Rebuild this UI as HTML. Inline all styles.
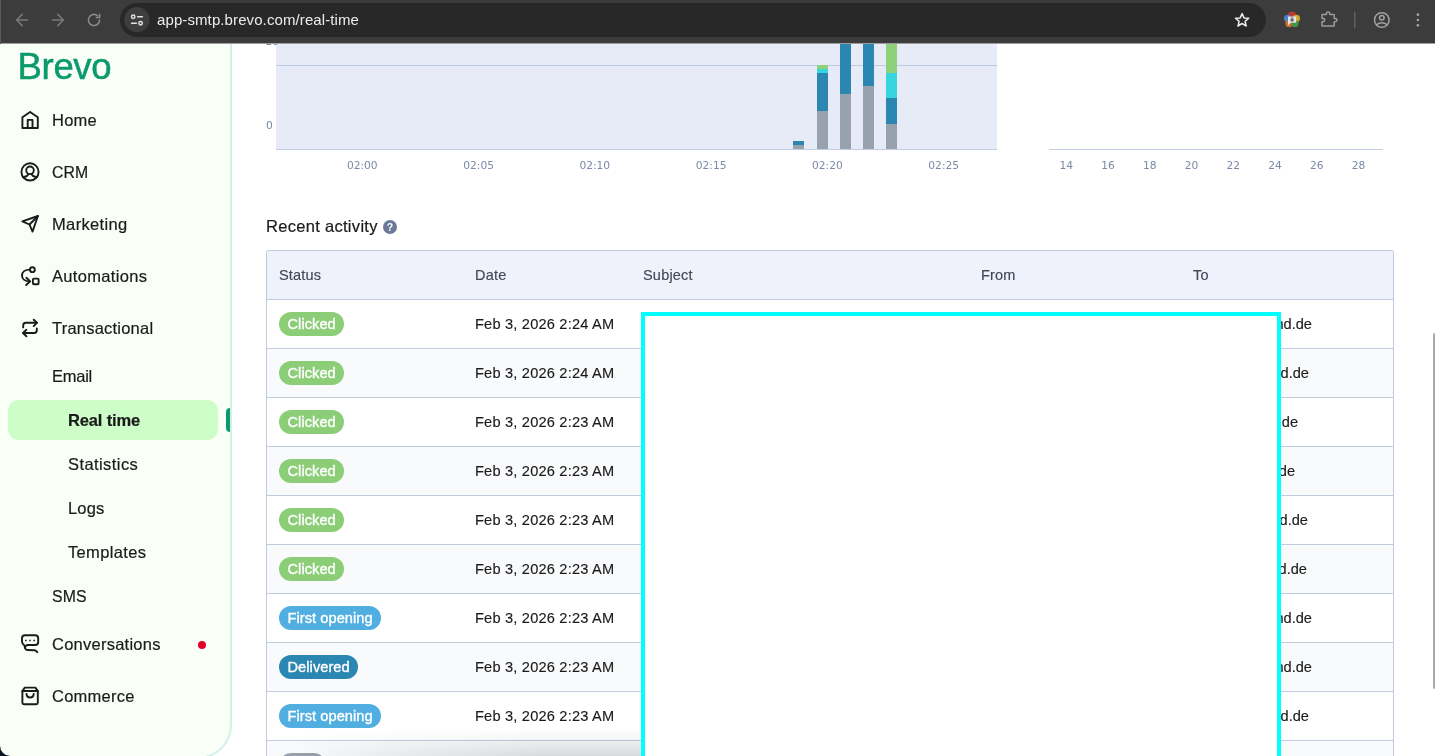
<!DOCTYPE html>
<html lang="en">
<head>
<meta charset="utf-8">
<title>Brevo - Real time</title>
<style>
*{box-sizing:border-box;margin:0;padding:0}
html,body{width:1435px;height:756px;overflow:hidden;background:#fff}
body{font-family:"Liberation Sans",sans-serif;color:#1b1b1b;position:relative}
#side,#main,#chrome{will-change:transform}
/* browser chrome */
#chrome{position:absolute;left:0;top:0;width:1435px;height:43px;background:#3c3c3c;z-index:50}
#chrome .edge{position:absolute;left:0;top:0;width:1px;height:44px;background:#5a5a5a}
#pill{position:absolute;left:120px;top:3px;width:1146px;height:34px;border-radius:17px;background:#282828}
#siteinfo{position:absolute;left:4px;top:3px;width:26px;height:26px;border-radius:13px;background:#3d3d3d}
#url{position:absolute;left:37px;top:0;height:34px;line-height:34px;font-size:15px;color:#ececec;white-space:nowrap;letter-spacing:0.1px}
#chrome svg{position:absolute;overflow:visible}
/* sidebar */
#side{position:absolute;left:0;top:44px;width:232px;height:715px;background:#f9fff6;border-right:2px solid #d2f0e8;border-bottom:2px solid #d2f0e8;border-bottom-right-radius:34px;z-index:5}
#logo{position:absolute;left:17.6px;top:3px;font-size:36.5px;line-height:40px;color:#0b996e;letter-spacing:-0.35px;-webkit-text-stroke:0.5px #0b996e}
.nav{position:absolute;left:52px;height:24px;line-height:24px;font-size:16.5px;color:#1b1b1b;white-space:nowrap;-webkit-text-stroke:0.2px #1b1b1b}
.nav.sub{left:68px}
.ico{position:absolute;left:19px;width:22px;height:22px;overflow:visible}
#active{position:absolute;left:8px;top:356px;width:210px;height:40px;border-radius:11px;background:#cdfec8}
#ind{position:absolute;left:226px;top:364px;width:4.4px;height:24px;background:#0b996e;border-radius:4px 0 0 4px}
#dot{position:absolute;left:198px;top:597px;width:8px;height:8px;border-radius:4px;background:#e4002b}
#corner{position:absolute;left:0;top:744px;width:12px;height:12px;background:#0a1626;z-index:4}
/* main */
#main{position:absolute;left:232px;top:44px;width:1203px;height:712px;background:#fff;overflow:hidden}
.dv{font-family:"DejaVu Sans",sans-serif;font-size:10.5px;color:#7d8aa8;position:absolute;white-space:nowrap}
h2{position:absolute;left:34px;top:170px;font-size:16.5px;font-weight:400;line-height:24px;letter-spacing:0.3px;color:#1b1b1b;white-space:nowrap;-webkit-text-stroke:0.2px #1b1b1b}
#tbl{position:absolute;left:34px;top:206px;width:1128px;height:520px;border:1px solid #c0cbdf;border-bottom:none;border-radius:3px 3px 0 0;background:#fff;overflow:hidden}
.hd{position:absolute;left:0;top:0;width:1126px;height:48px;background:#eff2fa}
.hd span{position:absolute;top:0;line-height:48px;font-size:14.5px;color:#414757;white-space:nowrap;letter-spacing:0.2px;-webkit-text-stroke:0.15px #414757}
.row{position:absolute;left:0;width:1126px;height:49px;border-top:1px solid #c0cbdf;background:#fff}
.row.alt{background:#f9fafc}
.row .d{position:absolute;left:208px;top:0;line-height:48px;font-size:14.6px;letter-spacing:0.2px;color:#1b1b1b;white-space:nowrap;-webkit-text-stroke:0.15px #1b1b1b}
.row .to{position:absolute;top:0;line-height:48px;font-size:14.6px;color:#1b1b1b;white-space:nowrap;right:0;-webkit-text-stroke:0.15px #1b1b1b}
.bdg{position:absolute;left:12px;top:12px;height:24px;line-height:24px;border-radius:12px;padding:0 8.5px;font-size:14.6px;letter-spacing:0.06px;color:#fff;white-space:nowrap;-webkit-text-stroke:0.35px #fff}
.g{background:#8ccd78}.lb{background:#51aee0}.db{background:#2b86b2}.gr{background:#98a1ae}
#help{position:absolute;left:151px;top:176px;width:14px;height:14px;border-radius:7px;background:#6b7a99;color:#fff;font-size:10.5px;font-weight:700;line-height:14px;text-align:center}
#cyan{position:absolute;left:409px;top:268px;width:640px;height:460px;border:4px solid #00ffff;background:#fff;z-index:8}
#sb{position:absolute;left:1201px;top:289px;width:3px;height:356px;background:#a9a9a9;border-radius:2px 0 0 2px}
#shade{position:absolute;left:58px;top:684px;width:351px;height:28px;z-index:7;pointer-events:none;background:linear-gradient(to bottom,rgba(0,0,0,0) 0%,rgba(0,0,0,0.04) 40%,rgba(0,0,0,0.13) 100%);-webkit-mask-image:linear-gradient(to right,transparent 0%,rgba(0,0,0,0.5) 30%,#000 75%);mask-image:linear-gradient(to right,transparent 0%,rgba(0,0,0,0.5) 30%,#000 75%)}
</style>
</head>
<body>
<div id="chrome">
  <div class="edge"></div>
  <div id="pill">
    <div id="url">app-smtp.brevo.com/real-time</div>
  </div>
  <svg width="1435" height="44" viewBox="0 0 1435 44" style="left:0;top:0" fill="none" stroke-linecap="round" stroke-linejoin="round">
    <g stroke="#7a7a7a" stroke-width="1.5">
      <path d="M27.6 20H16.8M22.2 14.4L16.6 20L22.2 25.6"/>
      <path d="M52.4 20H63.2M57.8 14.4L63.4 20L57.8 25.6"/>
    </g>
    <g stroke="#8c8c8c" stroke-width="1.5">
      <path d="M99.6 20A5.6 5.6 0 1 1 97.6 15.7"/>
      <path d="M99.6 14.2V17.6H96.2" />
    </g>
    <circle cx="137" cy="19.7" r="12.6" fill="#3e3e3e"/>
    <g stroke="#e3e3e3" stroke-width="1.5">
      <circle cx="133.2" cy="16.7" r="1.7"/>
      <path d="M137.6 16.7H142.4"/>
      <circle cx="140.6" cy="23.2" r="1.7"/>
      <path d="M131.6 23.2H136.4"/>
    </g>
    <!-- star -->
    <path d="M1242.1 13.6L1244 17.9L1248.7 18.3L1245.1 21.4L1246.2 26L1242.1 23.5L1238 26L1239.1 21.4L1235.5 18.3L1240.2 17.9Z" stroke="#ececec" stroke-width="1.5"/>
    <!-- extension flower -->
    <g stroke="none">
      <circle cx="1292" cy="15.6" r="4" fill="#b93a30"/>
      <circle cx="1287.6" cy="18.4" r="3.6" fill="#4d80c4"/>
      <circle cx="1296.4" cy="18.4" r="3.6" fill="#d1a826"/>
      <circle cx="1289" cy="23.6" r="3.6" fill="#cf7228"/>
      <circle cx="1295" cy="23.6" r="3.6" fill="#3f9747"/>
      <path d="M1288 16.4h8.2v6.4h-5.4l-2.8 2.6z" fill="#e4e4e4"/>
      <rect x="1290.6" y="18.8" width="3" height="2.6" fill="#5f6368"/>
      <path d="M1291.2 18.8v-0.6a0.9 0.9 0 0 1 1.8 0v0.6" stroke="#5f6368" stroke-width="0.7" fill="none"/>
    </g>
    <!-- puzzle -->
    <path d="M1322 14.6H1326.4V13.6A1.7 1.7 0 0 1 1329.8 13.6V14.6H1334.2V18.4H1335.2A1.7 1.7 0 0 1 1335.2 21.8H1334.2V26H1322V21.8H1323A1.7 1.7 0 0 0 1323 18.4H1322Z" stroke="#9b9b9b" stroke-width="1.5"/>
    <path d="M1354.8 12.4V27.6" stroke="#6a6a6a" stroke-width="1.2"/>
    <!-- profile -->
    <g stroke="#a2a2a2" stroke-width="1.5">
      <circle cx="1381.8" cy="20" r="7.3"/>
      <circle cx="1381.8" cy="17.8" r="2.3"/>
      <path d="M1376.6 24.6Q1381.8 21 1387 24.6"/>
    </g>
    <g fill="#a2a2a2" stroke="none"><circle cx="1417.9" cy="14.7" r="1.35"/><circle cx="1417.9" cy="20" r="1.35"/><circle cx="1417.9" cy="25.3" r="1.35"/></g>
  </svg>
</div>

<div style="position:absolute;left:0;top:43px;width:1435px;height:1px;background:rgba(60,60,60,0.5);z-index:51"></div>
<div id="side">
  <div id="logo">Brevo</div>
  <div id="active"></div><div id="ind"></div>
  <div class="nav" style="top:64px;letter-spacing:0.225px">Home</div>
  <div class="nav" style="top:117px;letter-spacing:0.033px;font-size:15.8px">CRM</div>
  <div class="nav" style="top:168px;letter-spacing:0.354px">Marketing</div>
  <div class="nav" style="top:220px;letter-spacing:0.328px">Automations</div>
  <div class="nav" style="top:272px;letter-spacing:0.220px">Transactional</div>
  <div class="nav" style="top:320px;letter-spacing:-0.260px">Email</div>
  <div class="nav sub" style="top:364px;font-weight:700;letter-spacing:-0.146px">Real time</div>
  <div class="nav sub" style="top:408px;letter-spacing:0.420px">Statistics</div>
  <div class="nav sub" style="top:452px;letter-spacing:0.175px">Logs</div>
  <div class="nav sub" style="top:496px;letter-spacing:0.344px">Templates</div>
  <div class="nav" style="top:541px;letter-spacing:0.103px;font-size:15.8px">SMS</div>
  <div class="nav" style="top:588px;letter-spacing:0.246px">Conversations</div>
  <div class="nav" style="top:640px;letter-spacing:0.237px">Commerce</div>
  <div id="dot"></div>
</div>
<svg id="icons" width="232" height="756" viewBox="0 0 232 756" style="position:absolute;left:0;top:0;z-index:6" fill="none" stroke="#1b1b1b" stroke-width="1.9" stroke-linecap="round" stroke-linejoin="round">
  <!-- home -->
  <path d="M22.4 128V117.3L30.1 112L37.8 117.3V128Z"/>
  <path d="M27.7 128V119.9H32.5V128"/>
  <!-- crm -->
  <circle cx="30" cy="171.9" r="8.6"/>
  <circle cx="30" cy="170.3" r="3.8"/>
  <path d="M22.9 177.1Q27.6 176.7 28.3 174M37.1 177.1Q32.4 176.7 31.7 174"/>
  <!-- marketing -->
  <path d="M37.9 216L22.3 221.3L29.5 224.5L32.5 231.6Z"/>
  <path d="M29.5 224.5L37.9 216"/>
  <!-- automations -->
  <circle cx="32.4" cy="269.7" r="2.4"/>
  <path d="M29.8 269.6C25 269.6 22 272 22 275.5C22 279 25 281.4 29.8 281.4"/>
  <path d="M26.4 277.8L30.1 281.4L26.2 285"/>
  <rect x="32.9" y="278.6" width="5.7" height="5.6" rx="1"/>
  <!-- transactional -->
  <path d="M23.2 327.4V325.4Q23.2 322.7 25.9 322.7H36.8"/>
  <path d="M33.7 319.7L37 322.7L33.7 326.1"/>
  <path d="M36.8 328.4V330.3Q36.8 333 34.1 333H23.2"/>
  <path d="M26.4 329.8L23 333L26.4 336.3"/>
  <!-- conversations -->
  <path d="M27.6 645H35.2Q38.2 645 38.2 642V638.2Q38.2 635.2 35.2 635.2H25Q22 635.2 22 638.2V641.6Q22 643.8 24.6 645.8Q24.8 650 27.4 650L34.6 650.3Q36.2 650.5 37.3 652.2"/>
  <path d="M27.6 645Q25.4 645.4 25 647.6"/>
  <path d="M25.9 640.4h0.01M30 640.4h0.01M34.1 640.4h0.01" stroke-width="1.5" stroke-linecap="square"/>
  <!-- commerce -->
  <path d="M22.4 691V702.7Q22.4 704.2 23.9 704.2H36.3Q37.8 704.2 37.8 702.7V691Z"/>
  <path d="M22.4 691L24.8 687.6H35.4L37.8 691"/>
  <path d="M26.5 693.9Q26.7 697.5 30.1 697.5Q33.5 697.5 33.7 693.9"/>
</svg>
<svg width="12" height="12" viewBox="0 0 12 12" style="position:absolute;left:0;top:744px;z-index:9"><path d="M0 1.5A10.5 10.5 0 0 0 10.5 12H0Z" fill="#0b1322"/></svg>

<div id="main">
  <!-- chart -->
  <svg id="chartsvg" width="1203" height="150" viewBox="232 44 1203 150" style="position:absolute;left:0;top:0" shape-rendering="crispEdges">
    <rect x="276" y="44" width="721" height="106" fill="#e7ebf7"/>
    <rect x="276" y="65" width="721" height="1" fill="#bccae2"/>
    <rect x="276" y="149" width="721" height="1" fill="#c3cde6"/>
    <rect x="1049" y="149" width="334" height="1" fill="#c3cde6"/>
    <g>
      <rect x="793" y="141" width="11" height="4" fill="#2b86b2"/><rect x="793" y="145" width="11" height="4" fill="#98a1ae"/>
      <rect x="817" y="65" width="11" height="4" fill="#8fd07a"/><rect x="817" y="69" width="11" height="4" fill="#38d4e0"/><rect x="817" y="73" width="11" height="38" fill="#2b86b2"/><rect x="817" y="111" width="11" height="38" fill="#98a1ae"/>
      <rect x="840" y="44" width="11" height="50" fill="#2b86b2"/><rect x="840" y="94" width="11" height="55" fill="#98a1ae"/>
      <rect x="863" y="44" width="11" height="42" fill="#2b86b2"/><rect x="863" y="86" width="11" height="63" fill="#98a1ae"/>
      <rect x="886" y="44" width="11" height="29" fill="#8fd07a"/><rect x="886" y="73" width="11" height="25" fill="#38d4e0"/><rect x="886" y="98" width="11" height="26" fill="#2b86b2"/><rect x="886" y="124" width="11" height="25" fill="#98a1ae"/>
    </g>
    <g font-family="'DejaVu Sans',sans-serif" font-size="10.67" fill="#7b89a8" text-anchor="middle">
      <text x="362.3" y="169">02:00</text><text x="478.6" y="169">02:05</text><text x="594.8" y="169">02:10</text><text x="711.1" y="169">02:15</text><text x="827.4" y="169">02:20</text><text x="943.7" y="169">02:25</text>
      <text x="269.5" y="129">0</text><text x="272" y="44.9">10</text>
      <text x="1066.3" y="169">14</text><text x="1108" y="169">16</text><text x="1149.8" y="169">18</text><text x="1191.6" y="169">20</text><text x="1233.3" y="169">22</text><text x="1275" y="169">24</text><text x="1316.8" y="169">26</text><text x="1358.5" y="169">28</text>
    </g>
  </svg>
  <h2>Recent activity</h2>
  <div id="help">?</div>
  <div id="tbl">
    <div class="hd"><span style="left:12px">Status</span><span style="left:208px">Date</span><span style="left:376px">Subject</span><span style="left:714px">From</span><span style="left:926px">To</span></div>
    <div class="row" style="top:48px"><span class="bdg g">Clicked</span><span class="d">Feb 3, 2026 2:24 AM</span><span class="to" style="right:81px">nd.de</span></div>
    <div class="row alt" style="top:97px"><span class="bdg g">Clicked</span><span class="d">Feb 3, 2026 2:24 AM</span><span class="to" style="right:84px">nd.de</span></div>
    <div class="row" style="top:146px"><span class="bdg g">Clicked</span><span class="d">Feb 3, 2026 2:23 AM</span><span class="to" style="right:95px">d.de</span></div>
    <div class="row alt" style="top:195px"><span class="bdg g">Clicked</span><span class="d">Feb 3, 2026 2:23 AM</span><span class="to" style="right:98px">d.de</span></div>
    <div class="row" style="top:244px"><span class="bdg g">Clicked</span><span class="d">Feb 3, 2026 2:23 AM</span><span class="to" style="right:85px">nd.de</span></div>
    <div class="row alt" style="top:293px"><span class="bdg g">Clicked</span><span class="d">Feb 3, 2026 2:23 AM</span><span class="to" style="right:86px">nd.de</span></div>
    <div class="row" style="top:342px"><span class="bdg lb">First opening</span><span class="d">Feb 3, 2026 2:23 AM</span><span class="to" style="right:81px">nd.de</span></div>
    <div class="row alt" style="top:391px"><span class="bdg db">Delivered</span><span class="d">Feb 3, 2026 2:23 AM</span><span class="to" style="right:81px">nd.de</span></div>
    <div class="row" style="top:440px"><span class="bdg lb">First opening</span><span class="d">Feb 3, 2026 2:23 AM</span><span class="to" style="right:84px">nd.de</span></div>
    <div class="row alt" style="top:489px"><span class="bdg gr">Sent</span><span class="d">Feb 3, 2026 2:23 AM</span><span class="to" style="right:84px">nd.de</span></div>
  </div>
  <div id="shade"></div>
  <div id="cyan"></div>
  <div id="sb"></div>
</div>
</body>
</html>
